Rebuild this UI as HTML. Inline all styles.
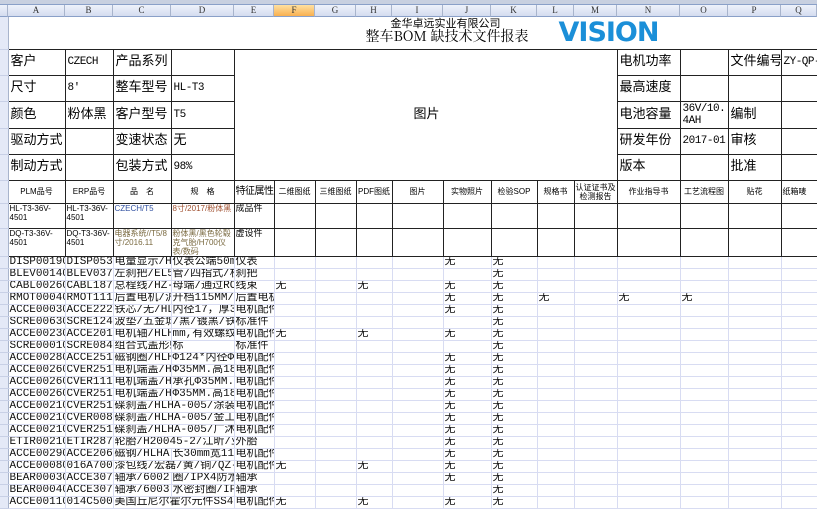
<!DOCTYPE html>
<html><head><meta charset="utf-8"><style>
*{margin:0;padding:0;box-sizing:border-box}
body{width:817px;height:510px;overflow:hidden;background:#fff;font-family:"Liberation Mono","Noto Sans CJK SC",monospace;font-size:12px;color:#000;position:relative}
.top{position:absolute;left:0;top:0;width:817px;height:5px;background:#c8d0e0;border-bottom:1px solid #8aa0c8}
.ch{position:absolute;top:5px;height:12px;background:linear-gradient(#eef2fb,#d4dcef);border-right:1px solid #a8b4cc;border-bottom:1px solid #8aa0c8;font-size:9px;line-height:11px;text-align:center;color:#333;font-family:"Liberation Serif",serif}
table{position:absolute;left:0;top:17px;border-collapse:collapse;table-layout:fixed;width:817px}
td{border:1px solid #d8dcf2;overflow:hidden;white-space:nowrap;padding:0 1px;vertical-align:middle;line-height:12px}
td.rh{background:#e4e9f7;border:none;border-right:1px solid #a8b4cc;border-bottom:1px solid #c8d0e6;padding:0}
.b{border:1px solid #222}
.big td.c{font-size:13px;padding-left:2px}
.big td.c.l{font-size:11px;letter-spacing:-0.5px}
.red{color:#7a6a40}
.hd td.b{text-align:center;font-size:8px;font-family:"Liberation Sans","Noto Sans CJK SC",sans-serif;white-space:normal;line-height:9px}
.d td{height:12px;font-size:11px;line-height:11px;padding:0 0 0 1px;color:#111}
</style></head><body>
<div class="top"></div>
<div class="ch" style="left:0;width:8px"></div>
<div class="ch" style="left:8px;width:57px">A</div>
<div class="ch" style="left:65px;width:48px">B</div>
<div class="ch" style="left:113px;width:58px">C</div>
<div class="ch" style="left:171px;width:63px">D</div>
<div class="ch" style="left:234px;width:40px">E</div>
<div class="ch" style="left:274px;width:41px;background:linear-gradient(#ffe0a0,#f8b050)">F</div>
<div class="ch" style="left:315px;width:41px">G</div>
<div class="ch" style="left:356px;width:36px">H</div>
<div class="ch" style="left:392px;width:51px">I</div>
<div class="ch" style="left:443px;width:48px">J</div>
<div class="ch" style="left:491px;width:46px">K</div>
<div class="ch" style="left:537px;width:37px">L</div>
<div class="ch" style="left:574px;width:43px">M</div>
<div class="ch" style="left:617px;width:63px">N</div>
<div class="ch" style="left:680px;width:48px">O</div>
<div class="ch" style="left:728px;width:53px">P</div>
<div class="ch" style="left:781px;width:36px">Q</div>
<table>
<colgroup><col style="width:8px"><col style="width:57px"><col style="width:48px"><col style="width:58px"><col style="width:63px"><col style="width:40px"><col style="width:41px"><col style="width:41px"><col style="width:36px"><col style="width:51px"><col style="width:48px"><col style="width:46px"><col style="width:37px"><col style="width:43px"><col style="width:63px"><col style="width:48px"><col style="width:53px"><col style="width:36px"></colgroup>
<tr style="height:32px"><td class="rh"></td><td colspan="17" style="border:none;border-bottom:1px solid #222;position:relative;padding:0">
<div style="position:absolute;left:382px;top:0;font-size:11px;font-family:'Noto Sans CJK SC',sans-serif">金华卓远实业有限公司</div>
<div style="position:absolute;left:357px;top:13px;font-size:14px;font-family:'Noto Serif CJK SC',serif">整车BOM 缺技术文件报表</div>
<div style="position:absolute;left:550px;top:1px;font-size:27px;font-weight:bold;color:#1b8fd8;font-family:'DejaVu Sans',sans-serif;letter-spacing:-1px;line-height:30px">VISION</div>
</td></tr>
<tbody class="big">
<tr style="height:26px"><td class="rh"></td><td class="b c">客户</td><td class="b c l">CZECH</td><td class="b c">产品系列</td><td class="b c"></td><td colspan="9" rowspan="5" class="b c" style="border-top:none;padding-left:179px">图片</td><td class="b c">电机功率</td><td class="b c"></td><td class="b c">文件编号</td><td class="b c l">ZY-QP-</td></tr>
<tr style="height:26px"><td class="rh"></td><td class="b c">尺寸</td><td class="b c l">8'</td><td class="b c">整车型号</td><td class="b c l">HL-T3</td><td class="b c">最高速度</td><td class="b c"></td><td class="b c"></td><td class="b c"></td></tr>
<tr style="height:27px"><td class="rh"></td><td class="b c">颜色</td><td class="b c">粉体黑</td><td class="b c">客户型号</td><td class="b c l">T5</td><td class="b c">电池容量</td><td class="b c l" style="white-space:normal;line-height:12px">36V/10.<br>4AH</td><td class="b c">编制</td><td class="b c"></td></tr>
<tr style="height:26px"><td class="rh"></td><td class="b c">驱动方式</td><td class="b c"></td><td class="b c">变速状态</td><td class="b c">无</td><td class="b c">研发年份</td><td class="b c l">2017-01</td><td class="b c">审核</td><td class="b c"></td></tr>
<tr style="height:26px"><td class="rh"></td><td class="b c">制动方式</td><td class="b c"></td><td class="b c">包装方式</td><td class="b c l">98%</td><td class="b c">版本</td><td class="b c"></td><td class="b c">批准</td><td class="b c"></td></tr>
</tbody>
<tbody class="hd">
<tr style="height:23px"><td class="rh"></td><td class="b">PLM品号</td><td class="b">ERP品号</td><td class="b">品　名</td><td class="b">规　格</td><td class="b" style="font-size:10px;white-space:nowrap;letter-spacing:-0.5px">特征属性</td><td class="b">二维图纸</td><td class="b">三维图纸</td><td class="b">PDF图纸</td><td class="b">图片</td><td class="b">实物照片</td><td class="b">检验SOP</td><td class="b">规格书</td><td class="b">认证证书及检测报告</td><td class="b">作业指导书</td><td class="b">工艺流程图</td><td class="b">贴花</td><td class="b" style="text-align:left">纸箱唛</td></tr>
<tr style="height:25px"><td class="rh"></td><td class="b" style="text-align:left;vertical-align:top">HL-T3-36V-4501</td><td class="b" style="text-align:left;vertical-align:top">HL-T3-36V-<br>4501</td><td class="b" style="text-align:left;vertical-align:top;color:#3050a0">CZECH/T5</td><td class="b" style="text-align:left;vertical-align:top;color:#a05030">8寸/2017/粉体黑</td><td class="b" style="text-align:left;vertical-align:top;font-size:9px">成品件</td><td class="b"></td><td class="b"></td><td class="b"></td><td class="b"></td><td class="b"></td><td class="b"></td><td class="b"></td><td class="b"></td><td class="b"></td><td class="b"></td><td class="b"></td><td class="b"></td></tr>
<tr style="height:25px"><td class="rh"></td><td class="b" style="text-align:left;vertical-align:top">DQ-T3-36V-4501</td><td class="b" style="text-align:left;vertical-align:top">DQ-T3-36V-<br>4501</td><td class="b red" style="text-align:left;vertical-align:top">电器系统//T5/8寸/2016.11</td><td class="b red" style="text-align:left;vertical-align:top">粉体黑/黑色轮毂克气胎/H700仪表/数码</td><td class="b" style="text-align:left;vertical-align:top;font-size:9px">虚设件</td><td class="b"></td><td class="b"></td><td class="b"></td><td class="b"></td><td class="b"></td><td class="b"></td><td class="b"></td><td class="b"></td><td class="b"></td><td class="b"></td><td class="b"></td><td class="b"></td></tr>
</tbody>
<tbody class="d">
<tr><td class="rh"></td><td>DISP00190300</td><td>DISP05300</td><td>电量显示/H7</td><td>仪表公端50mm</td><td>仪表</td><td></td><td></td><td></td><td></td><td>无</td><td>无</td><td></td><td></td><td></td><td></td><td></td><td></td></tr>
<tr><td class="rh"></td><td>BLEV00140030</td><td>BLEV03700</td><td>左刹把/EL55</td><td>管/四指式/机</td><td>刹把</td><td></td><td></td><td></td><td></td><td></td><td>无</td><td></td><td></td><td></td><td></td><td></td><td></td></tr>
<tr><td class="rh"></td><td>CABL00260200</td><td>CABL18700</td><td>总程线/HZ-A</td><td>母端/通过ROH</td><td>线束</td><td>无</td><td></td><td>无</td><td></td><td>无</td><td>无</td><td></td><td></td><td></td><td></td><td></td><td></td></tr>
<tr><td class="rh"></td><td>RMOT00040000</td><td>RMOT11100</td><td>后置电机/沪</td><td>开档115MM/左</td><td>后置电机</td><td></td><td></td><td></td><td></td><td>无</td><td>无</td><td>无</td><td></td><td>无</td><td>无</td><td></td><td></td></tr>
<tr><td class="rh"></td><td>ACCE00030000</td><td>ACCE22200</td><td>铁芯/无/HLH</td><td>内径17，厚30</td><td>电机配件</td><td></td><td></td><td></td><td></td><td>无</td><td>无</td><td></td><td></td><td></td><td></td><td></td><td></td></tr>
<tr><td class="rh"></td><td>SCRE00630030</td><td>SCRE12400</td><td>波垫/五金城</td><td>/黑/镀黑/铁/</td><td>标准件</td><td></td><td></td><td></td><td></td><td></td><td>无</td><td></td><td></td><td></td><td></td><td></td><td></td></tr>
<tr><td class="rh"></td><td>ACCE00230000</td><td>ACCE20100</td><td>电机轴/HLHA</td><td>mm,有效螺纹1</td><td>电机配件</td><td>无</td><td></td><td>无</td><td></td><td>无</td><td>无</td><td></td><td></td><td></td><td></td><td></td><td></td></tr>
<tr><td class="rh"></td><td>SCRE00010030</td><td>SCRE08400</td><td>组合式盖形螺</td><td>标</td><td>标准件</td><td></td><td></td><td></td><td></td><td></td><td>无</td><td></td><td></td><td></td><td></td><td></td><td></td></tr>
<tr><td class="rh"></td><td>ACCE00280000</td><td>ACCE25100</td><td>磁钢圈/HLHA</td><td>Φ124*内径Φ</td><td>电机配件</td><td></td><td></td><td></td><td></td><td>无</td><td>无</td><td></td><td></td><td></td><td></td><td></td><td></td></tr>
<tr><td class="rh"></td><td>ACCE00260130</td><td>CVER25100</td><td>电机端盖/HL</td><td>Φ35MM.高18M</td><td>电机配件</td><td></td><td></td><td></td><td></td><td>无</td><td>无</td><td></td><td></td><td></td><td></td><td></td><td></td></tr>
<tr><td class="rh"></td><td>ACCE00260130</td><td>CVER11100</td><td>电机端盖/HL</td><td>承孔Φ35MM.7</td><td>电机配件</td><td></td><td></td><td></td><td></td><td>无</td><td>无</td><td></td><td></td><td></td><td></td><td></td><td></td></tr>
<tr><td class="rh"></td><td>ACCE00260130</td><td>CVER25100</td><td>电机端盖/HL</td><td>Φ35MM.高18M</td><td>电机配件</td><td></td><td></td><td></td><td></td><td>无</td><td>无</td><td></td><td></td><td></td><td></td><td></td><td></td></tr>
<tr><td class="rh"></td><td>ACCE00210030</td><td>CVER25100</td><td colspan="2">碟刹盖/HLHA-005/涂装/亚</td><td>电机配件</td><td></td><td></td><td></td><td></td><td>无</td><td>无</td><td></td><td></td><td></td><td></td><td></td><td></td></tr>
<tr><td class="rh"></td><td>ACCE00210030</td><td>CVER00800</td><td colspan="2">碟刹盖/HLHA-005/金工/金</td><td>电机配件</td><td></td><td></td><td></td><td></td><td>无</td><td>无</td><td></td><td></td><td></td><td></td><td></td><td></td></tr>
<tr><td class="rh"></td><td>ACCE00210030</td><td>CVER25100</td><td colspan="2">碟刹盖/HLHA-005/广沐/毛</td><td>电机配件</td><td></td><td></td><td></td><td></td><td>无</td><td>无</td><td></td><td></td><td></td><td></td><td></td><td></td></tr>
<tr><td class="rh"></td><td>ETIR00210030</td><td>ETIR28700</td><td colspan="2">轮胎/H20045-2/江昕/亚黑</td><td>外胎</td><td></td><td></td><td></td><td></td><td>无</td><td>无</td><td></td><td></td><td></td><td></td><td></td><td></td></tr>
<tr><td class="rh"></td><td>ACCE00290130</td><td>ACCE20600</td><td>磁钢/HLHA-(</td><td>长30mm宽11.2</td><td>电机配件</td><td></td><td></td><td></td><td></td><td>无</td><td>无</td><td></td><td></td><td></td><td></td><td></td><td></td></tr>
<tr><td class="rh"></td><td>ACCE00080030</td><td>016A70000</td><td colspan="2">漆包线/宏磊/黄/铜/QZ-2-</td><td>电机配件</td><td>无</td><td></td><td>无</td><td></td><td>无</td><td>无</td><td></td><td></td><td></td><td></td><td></td><td></td></tr>
<tr><td class="rh"></td><td>BEAR00030030</td><td>ACCE30700</td><td>轴承/6002-2</td><td>圈/IPX4防水</td><td>轴承</td><td></td><td></td><td></td><td></td><td>无</td><td>无</td><td></td><td></td><td></td><td></td><td></td><td></td></tr>
<tr><td class="rh"></td><td>BEAR00040030</td><td>ACCE30700</td><td>轴承/6003-2</td><td>水密封圈/IPX</td><td>轴承</td><td></td><td></td><td></td><td></td><td></td><td>无</td><td></td><td></td><td></td><td></td><td></td><td></td></tr>
<tr><td class="rh"></td><td>ACCE00110030</td><td>014C50000</td><td colspan="2">美国丘尼尔霍尔元件SS41F</td><td>电机配件</td><td>无</td><td></td><td>无</td><td></td><td>无</td><td>无</td><td></td><td></td><td></td><td></td><td></td><td></td></tr>
</tbody>
</table>
</body></html>
